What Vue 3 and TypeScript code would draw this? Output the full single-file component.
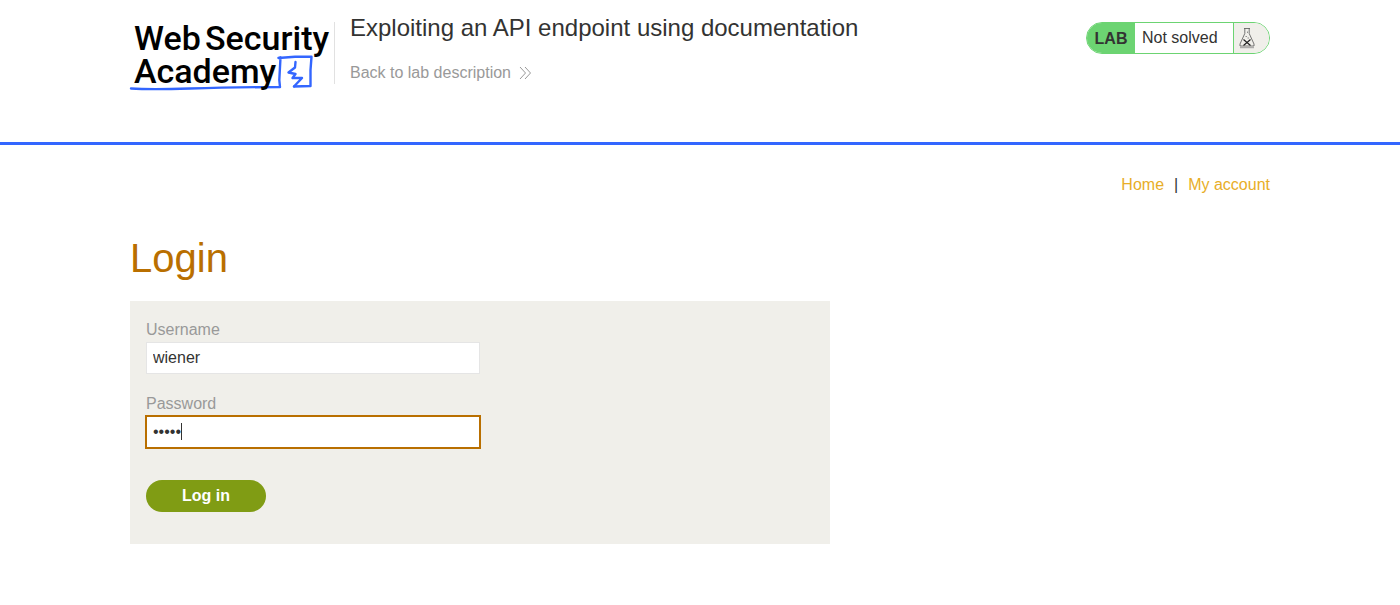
<script setup lang="ts">
import { onMounted, ref } from 'vue'

const username = ref('wiener')
const password = ref('peter')
const passwordInput = ref<HTMLInputElement | null>(null)
const restingCaret = ref(true)

onMounted(() => {
  const field = passwordInput.value
  if (!field) return
  field.focus()
  field.setSelectionRange(field.value.length, field.value.length)
})
</script>

<template>
  <div class="page">
    <header class="lab-header">
      <div class="container header-row">
        <a class="logo" href="#" aria-label="Web Security Academy">
          <svg width="202" height="74" viewBox="0 0 202 74" aria-hidden="true">
            <g fill="none" stroke="#3366ff" stroke-linejoin="round" stroke-linecap="round" stroke-width="2.400">
              <path d="M1 68.500 Q20 69.800 60 68.500 T150 67 L149.300 60 L150.500 37.500 L148.500 38 L165 36.800 L181.500 36.800 L180.500 50 L180.500 66 L164 66.500" />
              <path d="M165.500 42 L165 47.500 L158.500 52.500 L165.500 54 L162.500 58 L172 58 L164 66.500" />
            </g>
            <text x="4" y="30">Web</text>
            <text x="75" y="30">Security</text>
            <text x="4" y="63">Academy</text>
          </svg>
        </a>
        <div class="title-block">
          <h2>Exploiting an API endpoint using documentation</h2>
          <a class="back-link" href="#">
            Back to lab description
            <svg width="13" height="14" viewBox="0 0 13 14" fill="none" stroke="#999" aria-hidden="true">
              <path d="M1 1 L6.500 7 L1 13 M6 1 L11.500 7 L6 13" />
            </svg>
          </a>
        </div>
        <div class="lab-status">
          <span class="lab-tag">LAB</span>
          <p>Not solved</p>
          <span class="lab-icon">
            <svg width="16" height="21" viewBox="0 0 16 21" fill="none" stroke="#555" stroke-width="0.800" aria-hidden="true">
              <path d="M5 0.500 H11 M5.800 0.500 V5.500 L1 16 V18 H15 V16 L10.200 5.500 V0.500" />
              <path d="M1 19.700 H15" stroke="#888" />
              <path d="M8.500 3.500 V5 M6.500 8.500 H8 M8.500 10 H10" stroke="#777" />
              <path d="M4.500 11.500 L11.500 17.500 M11.500 11.500 L4.500 17.500" stroke="#222" stroke-width="1.200" />
            </svg>
          </span>
        </div>
      </div>
    </header>

    <main class="container">
      <nav class="top-links">
        <a href="#">Home</a>
        <span>|</span>
        <a href="#">My account</a>
      </nav>
      <h1>Login</h1>
      <form class="login-form" @submit.prevent>
        <label for="username">Username</label>
        <div class="field">
          <input id="username" v-model="username" type="text" name="username">
        </div>
        <label for="password">Password</label>
        <div class="field">
          <input
            id="password"
            ref="passwordInput"
            v-model="password"
            :class="{ resting: restingCaret }"
            type="password"
            name="password"
            @keydown="restingCaret = false"
            @blur="restingCaret = false"
          >
          <span v-if="restingCaret" class="caret"></span>
        </div>
        <button type="submit">Log in</button>
      </form>
    </main>
  </div>
</template>

<style>
body {
  margin: 0;
  background: #fff;
}
</style>

<style scoped>
.page {
  color: #333332;
  font: 16px/20px "Liberation Sans", Arial, sans-serif;
}

.container {
  box-sizing: border-box;
  max-width: 1140px;
  margin: 0 auto;
}

.lab-header {
  border-bottom: 3px solid #3366ff;
}

.header-row {
  display: flex;
  align-items: flex-start;
  padding: 14px 0 48px;
}

.logo {
  flex: none;
  width: 204px;
  padding-top: 6px;
}

.logo svg {
  display: block;
  overflow: visible;
}

.logo text {
  fill: #000;
  font-family: Roboto, sans-serif;
  font-size: 34px;
  font-weight: 500;
}

.title-block {
  position: relative;
  flex: 1;
  padding-left: 16px;
}

.title-block::before {
  content: "";
  position: absolute;
  top: 8px;
  bottom: 0;
  left: 0;
  border-left: 1px solid #e1e1e1;
}

.title-block h2 {
  margin: 0;
  font-size: 24px;
  font-weight: 400;
  line-height: 28px;
}

.back-link {
  display: flex;
  align-items: center;
  gap: 8px;
  margin-top: 20px;
  color: #999;
  line-height: 22px;
  text-decoration: none;
}

.lab-status {
  display: flex;
  box-sizing: border-box;
  flex: none;
  width: 184px;
  height: 32px;
  margin-top: 8px;
  overflow: hidden;
  border: 1px solid #6cd472;
  border-radius: 16px;
  line-height: 30px;
}

.lab-tag {
  width: 48px;
  background: #6cd472;
  font-weight: 700;
  line-height: 32px;
  text-align: center;
}

.lab-status p {
  flex: 1;
  margin: 0;
  padding-left: 7px;
}

.lab-icon {
  display: flex;
  align-items: center;
  width: 30px;
  padding-left: 5px;
  border-left: 1px solid #6cd472;
  background: #f0efea;
}

.top-links {
  display: flex;
  justify-content: flex-end;
  gap: 10px;
  padding-top: 30px;
}

.top-links a {
  color: #e8ae28;
  text-decoration: none;
}

h1 {
  margin: 40px 0 20px;
  color: #b96f00;
  font-size: 40px;
  font-weight: 400;
  line-height: 46px;
}

.login-form {
  box-sizing: border-box;
  max-width: 700px;
  padding: 19px 16px 32px;
  background: #f0efea;
}

.login-form label {
  display: block;
  color: #999;
}

.field {
  position: relative;
  width: 50%;
  margin: 2px 0 20px;
}

.field input {
  display: block;
  box-sizing: border-box;
  width: 100%;
  height: 32px;
  padding: 0 6px;
  border: 1px solid #e5e5e5;
  border-radius: 0;
  background: #fff;
  color: #333332;
  font: inherit;
}

.field input:focus {
  border-color: #b96f00;
  outline: 1px solid #b96f00;
}

.field input.resting {
  caret-color: transparent;
}

.caret {
  position: absolute;
  top: 7px;
  left: 35px;
  width: 1px;
  height: 17px;
  background: #333332;
  pointer-events: none;
}

.login-form button {
  display: block;
  width: 120px;
  height: 32px;
  margin-top: 32px;
  padding: 0;
  border: 0;
  border-radius: 16px;
  background: #809c14;
  color: #fff;
  font: inherit;
  font-weight: 700;
}
</style>
